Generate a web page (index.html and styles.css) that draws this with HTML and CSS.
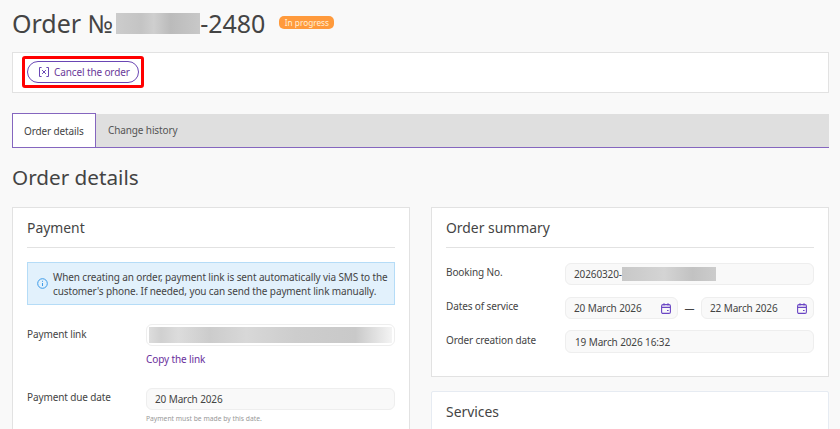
FILE: index.html
```html
<!DOCTYPE html>
<html lang="en">
<head>
<meta charset="utf-8">
<title>Order</title>
<link rel="stylesheet" href="styles.css">
</head>
<body>
<div class="page">
  <header class="title-row">
    <h1 class="title">Order №<span class="redact redact-title"></span>-2480</h1>
    <span class="badge">In progress</span>
  </header>
  <div class="action-bar">
    <div class="highlight">
      <button class="cancel-btn" type="button">
        <svg class="cancel-icon" width="10" height="10" viewBox="0 0 10 10" fill="none" stroke="#6a46b4" stroke-width="1"><path d="M2.6 .5H.5v9h2.1M7.4 .5h2.1v9H7.4M3.1 3.1l3.8 3.8M6.9 3.1L3.1 6.9"/></svg>
        Cancel the order
      </button>
    </div>
  </div>
  <nav class="tabs">
    <a class="tab tab-active">Order details</a>
    <a class="tab">Change history</a>
  </nav>
  <h2 class="section-title">Order details</h2>
  <div class="columns">
    <section class="card card-payment">
      <h3 class="card-title">Payment</h3>
      <div class="notice">
        <svg class="notice-icon" width="11" height="11" viewBox="0 0 11 11" fill="none" stroke="#3d9be9"><circle cx="5.5" cy="5.5" r="4.8"/><path d="M5.5 5v3M5.5 2.8v1"/></svg>
        <p class="notice-text">When creating an order, payment link is sent automatically via SMS to the customer's phone. If needed, you can send the payment link manually.</p>
      </div>
      <div class="field field-link">
        <span class="label">Payment link</span>
        <div class="control">
          <div class="input input-link"><span class="redact redact-link"></span></div>
          <a class="copy-link">Copy the link</a>
        </div>
      </div>
      <div class="field field-due">
        <span class="label">Payment due date</span>
        <div class="control">
          <div class="input">20 March 2026</div>
          <p class="hint">Payment must be made by this date.</p>
        </div>
      </div>
    </section>
    <div class="side">
      <section class="card card-summary">
        <h3 class="card-title">Order summary</h3>
        <div class="field field-booking">
          <span class="label">Booking No.</span>
          <div class="control"><div class="input">20260320-<span class="redact redact-booking"></span></div></div>
        </div>
        <div class="field field-dates">
          <span class="label">Dates of service</span>
          <div class="control date-range">
            <div class="input input-date">20 March 2026
              <svg class="cal" width="10" height="11" viewBox="0 0 10 11" fill="none" stroke="#6a46c4" stroke-width="1.1"><rect x=".6" y="1.6" width="8.8" height="8.8" rx="1.4"/><path d="M.6 4.4h8.8M3 .2v2.4M7 .2v2.4M6 7.5h1.6"/></svg>
            </div>
            <span class="dash">—</span>
            <div class="input input-date">22 March 2026
              <svg class="cal" width="10" height="11" viewBox="0 0 10 11" fill="none" stroke="#6a46c4" stroke-width="1.1"><rect x=".6" y="1.6" width="8.8" height="8.8" rx="1.4"/><path d="M.6 4.4h8.8M3 .2v2.4M7 .2v2.4M6 7.5h1.6"/></svg>
            </div>
          </div>
        </div>
        <div class="field field-created">
          <span class="label">Order creation date</span>
          <div class="control"><div class="input input-created">19 March 2026 16:32</div></div>
        </div>
      </section>
      <section class="card card-services">
        <h3 class="card-title">Services</h3>
      </section>
    </div>
  </div>
</div>
</body>
</html>
```
FILE: styles.css
```css
* { box-sizing: border-box; }
html, body { margin: 0; height: 100%; overflow: hidden; }
body {
  background: #f9f9f9;
  color: #444;
  font-family: "Noto Sans", sans-serif;
  font-size: 10px;
  letter-spacing: -0.12px;
}
.page { padding: 0 11px 0 12px; }
.title-row { display: flex; align-items: center; height: 52px; padding-bottom: 7px; }
.title { margin: 0; font-size: 25px; font-weight: 400; line-height: 36px; letter-spacing: 0; color: #444; display: flex; align-items: center; white-space: nowrap; }
.redact { display: inline-block; background: linear-gradient(90deg, #ccc, #c4c4c4 30%, #cfcfcf 45%, #bbb 65%, #c8c8c8); }
.redact-title { width: 84px; height: 21px; margin: 2px 0 0 3px; }
.badge {
  margin-left: 14px; margin-top: -1px; height: 13px; width: 55px; text-align: center;
  background: #ff9a3c; color: #fff0d8; border-radius: 5px;
  font-size: 8.25px; line-height: 13px; letter-spacing: 0; white-space: nowrap;
}
.action-bar { height: 41px; background: #fff; border: 1px solid #e2e2e2; padding: 3px 0 0 9px; }
.highlight { display: inline-flex; padding: 2px; border: 3px solid #f00; border-radius: 3px; }
.cancel-btn {
  display: flex; align-items: center; gap: 5px;
  height: 22px; width: 112px; padding: 0 0 1px 11px;
  background: #fff; border: 1px solid #6a46b4; border-radius: 11px;
  color: #6a3a9a; font: 10px/1 "Noto Sans", sans-serif; letter-spacing: -0.12px; white-space: nowrap;
}
.tabs { display: flex; height: 34px; margin-top: 21px; background: #dfdfdf; border-bottom: 1px solid #8566bf; }
.tab { display: flex; align-items: center; padding: 0 12px 1px; color: #555; }
.tab-active { width: 84px; height: 34px; margin-top: -1px; background: #fff; border: 1px solid #8566bf; border-bottom: 0; color: #444; padding: 0 0 0 11px; }
.section-title { margin: 15px 0 15px; font-size: 20.7px; font-weight: 400; line-height: 29px; letter-spacing: 0; color: #444; }
.columns { display: flex; gap: 21px; align-items: flex-start; }
.card-payment, .side { width: 398px; flex: none; }
.card { background: #fff; border: 1px solid #e2e2e2; padding: 0 14px; }
.card-title { margin: 0; height: 40px; padding-top: 9px; font-size: 13.9px; font-weight: 400; line-height: 22px; letter-spacing: 0; color: #444; border-bottom: 1px solid #e2e2e2; }
.notice {
  display: flex; align-items: center; gap: 5px; height: 43px; margin-top: 14px; padding: 0 0 0 9px;
  background: #e2f1fc; border: 1px solid #b5dcf7;
}
.notice-icon { flex: none; }
.notice-text { margin: 0; line-height: 14px; color: #444; width: 340px; }
.field { display: flex; }
.label { width: 119px; flex: none; line-height: 14px; color: #444; }
.control { flex: 1; min-width: 0; }
.input {
  display: flex; align-items: center; height: 22px; padding: 0 8px;
  background: #f9f9f9; border: 1px solid #eee; border-radius: 6px;
  color: #444;
}
.input-link { background: #fff; padding: 0 2px; }
.redact-link { width: 100%; height: 16px; background: linear-gradient(90deg, #ddd, #d0d0d0 5%, #dcdcdc 12%, #ccc 25%, #d8d8d8 40%, #cdcdcd 60%, #c9c9c9 85%, #f4f4f4); }
.copy-link { display: block; margin-top: 6px; line-height: 14px; color: #6a2f9c; }
.field-link { margin-top: 19px; }
.field-link .label { padding-top: 3px; }
.field-due { margin-top: 22px; }
.field-due .label { padding-top: 2px; }
.hint { margin: 4px 0 0; font-size: 6.75px; line-height: 10px; letter-spacing: 0; color: #999; }
.card-payment { height: 240px; }
.card-summary { height: 170px; }
.field-booking { margin-top: 15px; }
.field-dates { margin-top: 12px; }
.field-created { margin-top: 11px; }
.field-booking .label, .field-dates .label { padding-top: 2px; }
.field-created .label { padding-top: 3px; }
.input-created { height: 23px; padding-left: 9px; }
.redact-booking { width: 94px; height: 14px; background: linear-gradient(90deg, #c8c8c8, #d4d4d4 45%, #c2c2c2 75%, #ccc); }
.date-range { display: flex; align-items: center; }
.input-date { width: 113px; flex: none; justify-content: space-between; padding-right: 6px; }
.dash { width: 23px; text-align: center; color: #444; }
.card-services { margin-top: 14px; height: 60px; border-color: #e6ebf2; border-radius: 2px 2px 0 0; }
.card-services .card-title { border-bottom: 0; }
```
